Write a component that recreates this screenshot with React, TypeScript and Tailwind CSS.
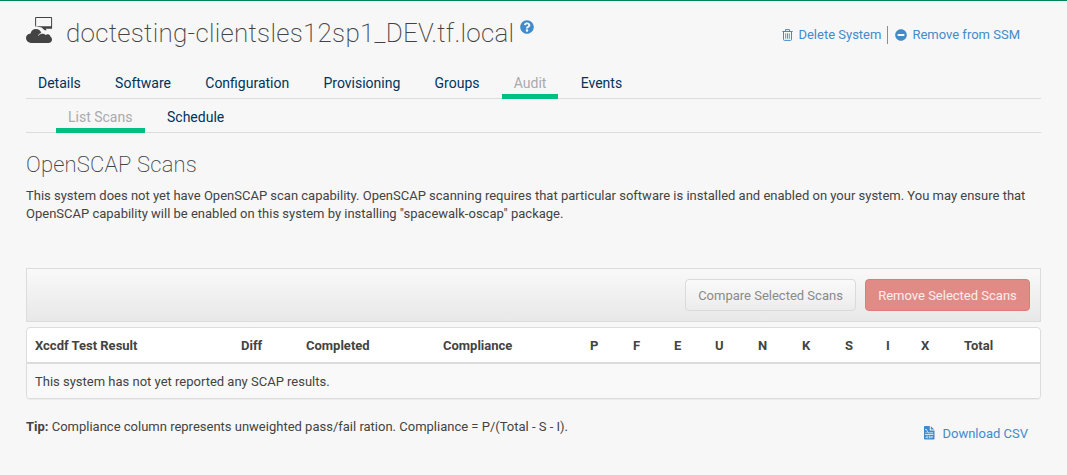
import React from "react";
import { FaQuestionCircle, FaMinusCircle } from "react-icons/fa";

const tabs = ["Details", "Software", "Configuration", "Provisioning", "Groups", "Audit", "Events"];

const columns: { label: string; width: string }[] = [
  { label: "Xccdf Test Result", width: "w-[206px]" },
  { label: "Diff", width: "w-[65px]" },
  { label: "Completed", width: "w-[137px]" },
  { label: "Compliance", width: "w-[147px]" },
  { label: "P", width: "w-[43px]" },
  { label: "F", width: "w-[41px]" },
  { label: "E", width: "w-[41px]" },
  { label: "U", width: "w-[43px]" },
  { label: "N", width: "w-[44px]" },
  { label: "K", width: "w-[43px]" },
  { label: "S", width: "w-[41px]" },
  { label: "I", width: "w-[35px]" },
  { label: "X", width: "w-[43px]" },
  { label: "Total", width: "w-[84px]" },
];

function SystemIcon() {
  return (
    <svg className="mt-[16px] h-[27px] w-[27px] shrink-0" viewBox="0 0 27 27" fill="#434343">
      <path
        fillRule="evenodd"
        d="M10 0h15.200a.9.9 0 0 1 .9.9v10a.9.9 0 0 1-.9.9h-5.400l.9 1.400h-2l-1.800-1.500-1.200-1.200-6.600-1.200V.9A.9.9 0 0 1 10 0Zm.1 1v8.300h15V1Z"
      />
      <path d="M5 26a5 5 0 0 1-5-4.800c0-2.500 1.700-4.500 4.600-4.600.3-2.800 2.500-4.700 5.300-4.700 2.600 0 4.700 1.500 5.400 3.800-2 .7-3.200 2.100-3.500 3.900.9-1.700 2.600-2.900 4.500-2.900 1.400 0 2.500.5 3.400 1.300.6-.5 1.300-.7 2.100-.7 1.500 0 2.500 1 2.700 2.500 1 .6 1.500 1.600 1.500 2.700 0 2-1.500 3.500-3.600 3.500Z" />
    </svg>
  );
}

function TrashIcon() {
  return (
    <svg className="mr-[5px] h-[12px] w-[11px]" viewBox="0 0 11 12" fill="none" stroke="#428bca">
      <path d="M.3 2.500h10.400M3.500 2.200V.6h4v1.600M1.500 3v7.400q0 1 1 1h6q1 0 1-1V3" />
      <path d="M3.700 4.300v5.400M5.500 4.300v5.400M7.300 4.300v5.400" strokeWidth=".9" />
    </svg>
  );
}

function CsvIcon() {
  return (
    <svg className="mr-[7px] -mt-[3px] h-[14px] w-[12px]" viewBox="0 0 12 14">
      <path fill="#428bca" d="M1.800 0h5v4.500h4.700V12.700a.8.8 0 0 1-.8.8H1.800a.8.8 0 0 1-.8-.8V.8A.8.8 0 0 1 1.800 0Zm6 .2 3.500 3.300H7.800Z" />
      <path fill="none" stroke="#f7f7f7" strokeWidth=".8" d="M2.200 3.500h1.300l1.400 3.300h1.400M2.500 6.700h1M6.500 6.800h3.600M2 8.500h8.400" />
      <path fill="none" stroke="#f7f7f7" strokeWidth=".7" d="M5 10.200H3.700v1.600H5M7.200 10.200H6v.8h1.200v.8H5.900M8.100 10l.7 1.800.7-1.800M2.400 11.600h.6" />
    </svg>
  );
}

export default function App() {
  return (
    <div className="h-[475px] border-t border-[#008657] bg-[#f7f7f7] px-[26px] font-['Roboto',sans-serif] text-[13px] leading-[18px] text-[#434343]">
      <header className="flex h-[64px] items-start">
        <SystemIcon />
        <h1 className="ml-[13px] mt-[15px] whitespace-nowrap text-[26px] font-extralight leading-[34px] tracking-[0.26px]">
          doctesting-clientsles12sp1_DEV.tf.local
        </h1>
        <FaQuestionCircle className="ml-[6px] mt-[19px] h-[14px] w-[14px] text-[#428bca]" />
        <div className="ml-auto mr-[21px] mt-[25px] flex h-[18px] items-center whitespace-nowrap text-[#428bca]">
          <TrashIcon />
          <a>Delete System</a>
          <span className="ml-[6px] mr-[7px] h-[18px] w-px bg-[#8d8d8d]" />
          <FaMinusCircle className="mr-[5px] h-[12px] w-[12px]" />
          <a>Remove from SSM</a>
        </div>
      </header>

      <nav className="flex h-[34px] gap-[10.25px] border-b border-[#dcdcdc] text-[14px] leading-[20px]">
        {tabs.map((tab) => (
          <a
            key={tab}
            className={
              tab === "Audit"
                ? "h-[34px] border-b-[5px] border-[#00c081] px-[12px] pt-[8px] text-[#aaaaaa]"
                : "h-[34px] px-[12px] pt-[8px] text-[#00335b]"
            }
          >
            {tab}
          </a>
        ))}
      </nav>
      <nav className="flex h-[34px] gap-[10px] border-b border-[#dcdcdc] pl-[30px] text-[14px] leading-[20px]">
        <a className="h-[34px] w-[89px] border-b-[5px] border-[#00c081] px-[12px] pt-[8px] text-[#aaaaaa]">List Scans</a>
        <a className="px-[12px] pt-[8px] text-[#00335b]">Schedule</a>
      </nav>

      <h2 className="mt-[19px] text-[22px] font-extralight leading-[26px] tracking-[0.18px]">OpenSCAP Scans</h2>
      <p className="mt-[9px] h-[36px] whitespace-nowrap">
        This system does not yet have OpenSCAP scan capability. OpenSCAP scanning requires that particular software is installed and enabled on your system. You may ensure that
        <br />
        OpenSCAP capability will be enabled on this system by installing "spacewalk-oscap" package.
      </p>

      <div className="mt-[45px] flex h-[54px] items-start justify-end gap-[9px] border border-[#dcdcdc] bg-gradient-to-b from-[#f9f9f9] to-[#e8e8e8] pr-[10px] pt-[10px]">
        <button className="h-[32px] w-[171px] whitespace-nowrap rounded-[4px] border border-[#dadada] bg-gradient-to-b from-[#fafafa] to-[#ececec] pt-[2px] text-[#8a8a8a]">
          Compare Selected Scans
        </button>
        <button className="h-[32px] w-[165px] whitespace-nowrap rounded-[4px] border border-[#dd7c79] bg-[#e18b87] pt-[2px] text-[#fbeeed]">
          Remove Selected Scans
        </button>
      </div>

      <div className="mt-[5px] h-[72px] rounded-[4px] border border-[#dcdcdc] bg-white pr-px shadow-[0_1px_1px_rgba(0,0,0,0.05)]">
        <table className="w-full table-fixed border-separate border-spacing-0 text-left">
          <thead>
            <tr>
              {columns.map((column) => (
                <th key={column.label} className={`${column.width} h-[36px] whitespace-nowrap border-b-2 border-[#dcdcdc] p-0 pl-[8px] pt-px font-bold`}>
                  {column.label}
                </th>
              ))}
            </tr>
          </thead>
          <tbody>
            <tr>
              <td colSpan={14} className="h-[34px] rounded-b-[3px] bg-[#f9f9f9] p-0 pl-[8px] pt-[2px]">
                This system has not yet reported any SCAP results.
              </td>
            </tr>
          </tbody>
        </table>
      </div>

      <footer className="flex items-start justify-between pt-[19px]">
        <p>
          <strong className="font-bold">Tip:</strong> Compliance column represents unweighted pass/fail ration. Compliance = P/(Total - S - I).
        </p>
        <a className="mr-[13px] mt-[7px] flex items-center text-[#428bca]">
          <CsvIcon />
          Download CSV
        </a>
      </footer>
    </div>
  );
}
